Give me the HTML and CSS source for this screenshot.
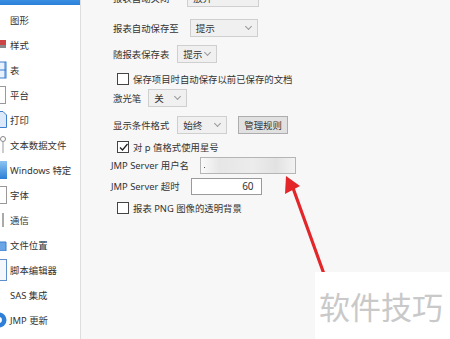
FILE: index.html
```html
<!DOCTYPE html>
<html lang="zh-CN">

<head>
  <meta charset="UTF-8">
  <title>JMP 首选项</title>
  <link rel="stylesheet" href="styles.css">
</head>

<body>
  <div class="window">
    <div class="side">
      <ul class="sideList">
        <li class="selected"></li>
        <li><span class="ico"></span>图形</li>
        <li><span class="ico"><svg width="16" height="16"><rect x="8" y="3" width="6" height="5" fill="#c44"/><rect x="8" y="8" width="6" height="3" fill="#888"/></svg></span>样式</li>
        <li><span class="ico"><svg width="16" height="18"><rect x="2" y="1" width="12" height="16" fill="#e8f2fc" stroke="#3a7fd0"/><path d="M2 9h12M13 1v16" stroke="#3a7fd0"/></svg></span>表</li>
        <li><span class="ico"><svg width="16" height="18"><rect x="2.5" y="0.5" width="11" height="17" fill="#fff" stroke="#999"/></svg></span>平台</li>
        <li><span class="ico"><svg width="16" height="17"><path d="M2 .5h9l3.5 3.5v12.5H2z" fill="#dbe9fb" stroke="#3f7fcf"/></svg></span>打印</li>
        <li><span class="ico"><svg width="16" height="18"><circle cx="11" cy="3" r="2.5" fill="#fff" stroke="#888"/><path d="M11 5.5V17" stroke="#999"/></svg></span>文本数据文件</li>
        <li><span class="ico"><svg width="16" height="18"><defs><linearGradient id="g1" x1="0" y1="0" x2="0" y2="1"><stop offset="0" stop-color="#8cc4f2"/><stop offset="1" stop-color="#2b7ed6"/></linearGradient></defs><rect x="1" y="0" width="14" height="18" fill="url(#g1)"/></svg></span>Windows 特定</li>
        <li><span class="ico"><svg width="16" height="18"><rect x="2.5" y="0.5" width="12" height="17" fill="#fff" stroke="#999"/></svg></span>字体</li>
        <li><span class="ico"><svg width="16" height="16"><rect x="10" y="1" width="2" height="14" fill="#aaa"/></svg></span>通信</li>
        <li><span class="ico"><svg width="16" height="12"><path d="M0 1h6l2 2h6v9H0z" fill="#6aa6e6" stroke="#3b7ccc"/></svg></span>文件位置</li>
        <li><span class="ico"><svg width="16" height="22"><rect x="1.5" y="0.5" width="13" height="21" fill="#f4f8fd" stroke="#5e8fcc"/></svg></span>脚本编辑器</li>
        <li><span class="ico"></span>SAS 集成</li>
        <li><span class="ico"><svg width="16" height="16"><circle cx="7" cy="8" r="7.5" fill="#2f7fd8"/><circle cx="7" cy="8" r="3" fill="#fff"/></svg></span>JMP 更新</li>
      </ul>
    </div>

    <div class="panel">
      <div class="row first">
        <span class="label">报表自动关闭</span>
        <span class="select w72">放弃<i class="chev"></i></span>
      </div>
      <div class="row mt12">
        <span class="label">报表自动保存至</span>
        <span class="select w68 push8">提示<i class="chev"></i></span>
      </div>
      <div class="row mt8">
        <span class="label">随报表保存表</span>
        <span class="select w40">提示<i class="chev"></i></span>
      </div>
      <div class="row mt7">
        <span class="box"></span>
        <span>保存项目时自动保存以前已保存的文档</span>
      </div>
      <div class="row mt1">
        <span class="label">激光笔</span>
        <span class="select w39">关<i class="chev"></i></span>
      </div>
      <div class="row mt9">
        <span class="label">显示条件格式</span>
        <span class="select w50">始终<i class="chev"></i></span>
        <span class="button">管理规则</span>
      </div>
      <div class="row mt4">
        <span class="box checked"><svg width="11" height="11"><path d="M2 5.5l2.5 2.5 5-6" fill="none" stroke="#222" stroke-width="1.3"/></svg></span>
        <span>对 p 值格式使用星号</span>
      </div>
      <div class="row mt0">
        <span class="label tight">JMP Server 用户名</span>
        <span class="field blur"><i class="dot"></i></span>
      </div>
      <div class="row mt3">
        <span class="label tight">JMP Server 超时</span>
        <span class="field num">60</span>
      </div>
      <div class="row mt4">
        <span class="box"></span>
        <span>报表 PNG 图像的透明背景</span>
      </div>
    </div>
  </div>

  <svg class="arrow" width="60" height="110" viewBox="0 0 60 110">
    <path d="M48 100 L17 14" stroke="#e3262a" stroke-width="3.2" stroke-linecap="round"/>
    <path d="M10 2 L9 20 L24 12 Z" fill="#e3262a"/>
  </svg>

  <div class="mark">软件技巧</div>
</body>

</html>
```

FILE: styles.css
```css
body {
  margin: 0;
  width: 450px;
  height: 339px;
  overflow: hidden;
  position: relative;
  background-color: #f7f7f7;
  font-family: "Noto Sans", "Noto Sans CJK SC", sans-serif;
  font-size: 9.4px;
  color: #333;
}

.window {
  display: flex;
  height: 339px;
}

/* 왼쪽 목록 */
.side {
  width: 80px;
  flex-shrink: 0;
  background-color: #fff;
  border-right: 1px solid #dedede;
}

.sideList {
  list-style: none;
  margin: 0;
  padding: 0;
}

.sideList li {
  display: flex;
  align-items: center;
  height: 25px;
  white-space: nowrap;
}

.sideList li.selected {
  height: 5px;
  margin-bottom: 2px;
  background: linear-gradient(#3a8fe3, #2a80d8);
}

.ico {
  display: flex;
  align-items: center;
  width: 16px;
  margin-left: -8px;
  margin-right: 2px;
  overflow: hidden;
}

/* 오른쪽 설정 */
.panel {
  flex: 1;
  padding-left: 32px;
}

.row {
  display: flex;
  align-items: center;
  height: 18px;
  white-space: nowrap;
}

.row.first { margin-top: -11px; }
.mt0 { margin-top: 0; }
.mt1 { margin-top: 1px; }
.mt3 { margin-top: 3px; }
.mt4 { margin-top: 4px; }
.mt7 { margin-top: 7px; }
.mt8 { margin-top: 8px; }
.mt9 { margin-top: 9px; }
.mt12 { margin-top: 12px; }

.label {
  margin-right: 5px;
}

.label.tight {
  margin-left: -2px;
  margin-right: 10px;
}

.select {
  display: flex;
  align-items: center;
  justify-content: space-between;
  box-sizing: border-box;
  height: 18px;
  padding: 0 6px 0 5px;
  background-color: #f0f0f0;
  border: 1px solid #cfcfcf;
  font-size: 9.6px;
}

.w72 { width: 72px; margin-left: 13px; }
.w68 { width: 68px; }
.push8 { margin-left: 6px; }
.w40 { width: 40px; margin-left: 3px; }
.w39 { width: 39px; margin-left: 2px; }
.w50 { width: 50px; margin-left: 3px; }

.chev {
  width: 4px;
  height: 4px;
  margin-top: -3px;
  border-right: 1px solid #999;
  border-bottom: 1px solid #999;
  transform: rotate(45deg);
}

.button {
  display: flex;
  align-items: center;
  box-sizing: border-box;
  height: 18px;
  margin-left: 11px;
  padding: 0 5px;
  background-color: #e1e1e1;
  border: 1px solid #adadad;
}

.box {
  box-sizing: border-box;
  width: 12px;
  height: 12px;
  margin-left: 4px;
  margin-right: 4px;
  background-color: #fff;
  border: 1px solid #444;
  display: flex;
  align-items: center;
  justify-content: center;
}

.field {
  box-sizing: border-box;
  height: 17px;
  background-color: #fff;
  border: 1px solid #9a9a9a;
}

.field.blur {
  width: 96px;
  margin-left: 1px;
  position: relative;
  background: linear-gradient(90deg, #fafafa 0%, #e6e6e6 20%, #ececec 55%, #e2e2e2 80%, #f2f2f2 100%);
  border-color: #b5b5b5;
}

.dot {
  position: absolute;
  left: 3px;
  top: 9px;
  width: 1px;
  height: 1px;
  background-color: #555;
}

.field.num {
  width: 71px;
  margin-left: 1px;
  display: flex;
  align-items: center;
  justify-content: flex-end;
  padding-right: 7px;
  font-size: 10px;
}

/* 빨간 화살표 */
.arrow {
  position: absolute;
  left: 276px;
  top: 174px;
}

/* 워터마크 */
.mark {
  position: absolute;
  left: 315px;
  top: 272px;
  width: 135px;
  height: 67px;
  background-color: #fff;
  color: #c9c9c9;
  font-family: "Noto Sans CJK SC", sans-serif;
  font-size: 31px;
  line-height: 68px;
  padding-left: 4px;
  box-sizing: border-box;
}
```
